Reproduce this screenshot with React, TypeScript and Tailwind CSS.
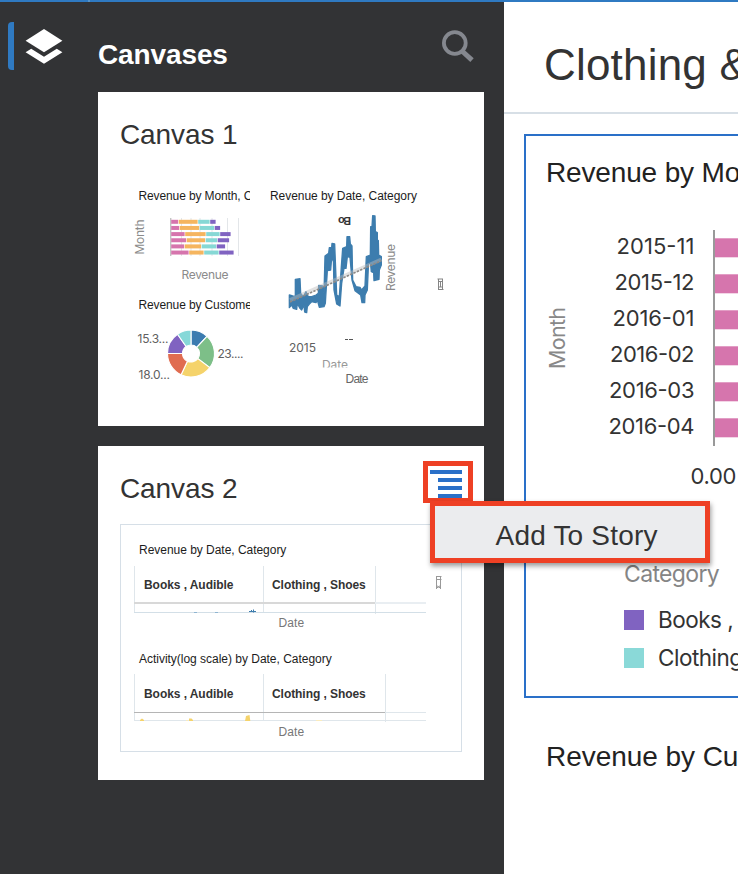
import React from "react";

const helv = "font-['Liberation_Sans',Arial,sans-serif]";

const months = ["2015-11", "2015-12", "2016-01", "2016-02", "2016-03", "2016-04"];
const monthWidths = [78, 80, 82, 84.5, 85.5, 86];

const miniBars = [
  [7.5, 19.5, 12, 6],
  [8.5, 20, 15, 6],
  [14, 21, 14, 11],
  [15.5, 19, 12, 12],
  [13.5, 17, 15, 9],
  [18, 15, 15, 15],
];
const seriesColors = ["#d675ad", "#f5b55f", "#86d8d5", "#8063c1"];

const slices: [number, number, string][] = [
  [0, 43, "#3c7cb0"],
  [43, 127, "#7dbf88"],
  [127, 205, "#f5d36b"],
  [205, 270, "#e06c50"],
  [270, 325, "#8063c1"],
  [325, 360, "#86d8d8"],
];

function slicePath(a: number, b: number) {
  const pt = (r: number, d: number) => {
    const t = (d * Math.PI) / 180;
    return `${(71 + r * Math.sin(t)).toFixed(2)} ${(40.5 - r * Math.cos(t)).toFixed(2)}`;
  };
  return `M${pt(23.5, a)} A23.5 23.5 0 0 1 ${pt(23.5, b)} L${pt(8.5, b)} A8.5 8.5 0 0 0 ${pt(8.5, a)} Z`;
}

function MiniTitle({ children, className = "" }: { children: React.ReactNode; className?: string }) {
  return (
    <div className={`h-4 overflow-hidden whitespace-nowrap text-[12px] leading-4 text-[#1c1c1c] ${helv} ${className}`}>
      {children}
    </div>
  );
}

function MiniBarChart() {
  return (
    <svg width="130" height="93" className="block">
      {[61.5, 71, 80, 92, 107.5, 118.5].map((x) => (
        <line key={x} x1={x} x2={x} y1="14" y2="52" stroke="#e3e6e9" strokeWidth="1" />
      ))}
      <line x1="50.8" x2="50.8" y1="14" y2="52" stroke="#aaa" />
      {miniBars.map((row, i) => {
        let x = 51.2;
        return row.map((w, j) => {
          const bar = <rect key={`${i}-${j}`} x={x} y={15.8 + i * 6.15} width={w - 0.6} height="4" fill={seriesColors[j]} />;
          x += w;
          return bar;
        });
      })}
      <text x="24" y="50.5" transform="rotate(-90 24 50.5)" fontSize="12" textLength="35" fill="#8b8b8b" fontFamily="Inter, sans-serif">Month</text>
      <text x="61.5" y="74.5" fontSize="12" textLength="47" fill="#8b8b8b" fontFamily="Inter, sans-serif">Revenue</text>
    </svg>
  );
}

function DonutChart() {
  return (
    <svg width="130" height="81" className="block">
      {slices.map(([a, b, c]) => (
        <path key={a} d={slicePath(a, b)} fill={c} stroke="#fff" strokeWidth="1.1" />
      ))}
      <g fontFamily="Inter, sans-serif" fontSize="12" fill="#606060">
        <text x="17.5" y="30" textLength="31">15.3...</text>
        <text x="97.5" y="44.5" textLength="26">23....</text>
        <text x="18.5" y="66" textLength="31.5">18.0...</text>
      </g>
    </svg>
  );
}

function TrendChart() {
  return (
    <svg width="212" height="190" viewBox="250 204 212 190" className="block">
      <g transform="translate(260 180) scale(.33333)">
        <path
          fill="#3d7dae"
          stroke="#3d7dae"
          strokeWidth="4"
          strokeLinejoin="round"
          d="M88 345L98 348 106 350 106 298 120 296 122 340 130 350 138 335 145 350 155 350 168 345 175 340 176 316 188 318 192 340 195 228 206 220 208 203 215 203 216 190 224 192 230 345 238 350 244 260 248 205 260 200 261 170 269 170 271 192 276 198 278 300 288 320 300 322 305 330 315 318 319 230 331 225 332 140 336 140 338 107 345 108 346 155 352 158 352 180 355 182 356 225 364 230 364 255 358 270 357 298 348 300 342 302 341 278 334 275 332 255 326 240 322 330 315 345 314 368 306 368 302 345 285 332 276 300 270 232 262 230 258 265 252 265 245 310 240 378 230 372 222 330 220 230 214 245 212 270 202 272 196 370 192 380 178 382 172 360 168 368 155 365 148 372 142 380 140 398 134 396 132 375 125 390 120 385 112 370 110 388 100 385 95 375 88 383Z"
        />
        <path d="M90 360L364 238" stroke="#bdbdbd" strokeOpacity=".45" strokeWidth="11" />
        <path d="M90 366L364 242" stroke="#8d8986" strokeWidth="5" strokeDasharray="7 4" />
      </g>
      <text x="351" y="217" transform="rotate(180 351 217)" fontSize="11" fontWeight="bold" fill="#333" textLength="13" fontFamily="Liberation Sans, sans-serif">Bo</text>
      <text x="394.5" y="291" transform="rotate(-90 394.5 291)" fontSize="12" textLength="47" fill="#8b8b8b" fontFamily="Inter, sans-serif">Revenue</text>
      <path d="M437.5 279h5.5M438 281.5h5M438 289.5h5.5M438.5 279v11M442.5 279v11M440.5 282v5M439 287h3" stroke="#858585" fill="none" />
      <path d="M345 339.5h3M349 339.5h4" stroke="#555" />
      <text x="289" y="352" fontSize="12" textLength="27" fill="#606060" fontFamily="Inter, sans-serif">2015</text>
      <svg x="318" y="356" width="36" height="11.5">
        <text x="4" y="12.5" fontSize="12" textLength="26" fill="#999" fontFamily="Inter, sans-serif">Date</text>
      </svg>
      <text x="345.5" y="382.5" fontSize="12" textLength="23" fill="#666" fontFamily="Liberation Sans, sans-serif">Date</text>
    </svg>
  );
}

function TrellisTable({ wide, children }: { wide?: boolean; children: React.ReactNode }) {
  return (
    <div className={`ml-[13px] flex w-[292px] flex-col ${helv}`}>
      <div className={wide ? "flex h-[39px]" : "flex h-9"}>
        <div className={`w-[129px] border-l border-[#dfe6eb] pl-[9px] text-[12px] font-bold text-[#333] ${wide ? "leading-[40px]" : "leading-[38px]"}`}>
          <span className="tracking-[-0.06px]">Books , Audible</span>
        </div>
        <div className={`border-x border-[#dfe6eb] pl-2 text-[12px] font-bold text-[#333] ${wide ? "w-[123px] leading-[40px]" : "w-[113px] leading-[38px]"}`}>
          <span className="tracking-[-0.06px]">Clothing , Shoes</span>
        </div>
      </div>
      <div className="flex">
        <div className={wide ? "-mt-px h-px w-[251px] bg-[#b5b5b5]" : "h-0.5 w-[241px] bg-[#d8d8d8]"} />
        <div className={wide ? "-mt-px h-px flex-1 bg-[#dfe6eb]" : "h-0.5 flex-1 bg-[#e9eef2]"} />
      </div>
      {children}
    </div>
  );
}

function CanvasOne() {
  return (
    <section className="h-[334px] bg-white pl-[22px] pt-[25px]">
      <h2 className={`h-9 text-[28px] leading-9 tracking-[-0.1px] text-[#333] ${helv}`}>Canvas 1</h2>
      <div className="mt-[35px] flex">
        <div className="w-[130px] overflow-hidden">
          <MiniTitle className="pl-[18.5px] tracking-[-0.12px]">Revenue by Month, Category</MiniTitle>
          <MiniBarChart />
          <MiniTitle className="pl-[18.5px] tracking-[-0.12px]">Revenue by Customer</MiniTitle>
          <DonutChart />
        </div>
        <div className="w-[212px]">
          <MiniTitle className="pl-5 tracking-[-0.05px]">Revenue by Date, Category</MiniTitle>
          <TrendChart />
        </div>
      </div>
    </section>
  );
}

function CanvasTwo() {
  return (
    <section className="h-[334px] bg-white px-[22px] pt-6">
      <div className="flex h-9 items-start justify-between">
        <h2 className={`pt-px text-[28px] leading-9 tracking-[-0.1px] text-[#333] ${helv}`}>Canvas 2</h2>
        <div className="flex h-7 w-8 flex-col items-end gap-1">
          <div className="h-1 w-8 bg-[#2a70c8]" />
          <div className="h-1 w-6 bg-[#2a70c8]" />
          <div className="h-1 w-6 bg-[#2a70c8]" />
          <div className="h-1 w-6 bg-[#2a70c8]" />
        </div>
      </div>
      <div className="relative mt-[18px] h-[228px] w-[342px] border border-[#d6dfe7] pt-[17px]">
        <MiniTitle className="pl-[18px] tracking-[-0.03px]">Revenue by Date, Category</MiniTitle>
        <div className="h-2" />
        <TrellisTable>
          <svg width="292" height="10" className="block">
            <path d="M.5 0v8M129.5 0v8M241.5 0v10" stroke="#dfe6eb" />
            <path d="M0 8.5h292" stroke="#d3dfe7" />
            <path d="M60 8.5h3M81 8.5h3" stroke="#8fb5d1" />
            <path d="M115 7.5h7M119.5 5.5v3M117.5 6v2" stroke="#3d7dae" />
          </svg>
        </TrellisTable>
        <div className={`h-4 pl-[157.5px] pt-px text-[12px] leading-4 tracking-[0.1px] text-[#777] ${helv}`}>Date</div>
        <MiniTitle className="mt-[21px] pl-[18px] tracking-[-0.02px]">Activity(log scale) by Date, Category</MiniTitle>
        <div className="h-[7px]" />
        <TrellisTable wide>
          <svg width="292" height="9" className="block">
            <path d="M.5 0v8M129.5 0v8M251.5 0v9" stroke="#dfe6eb" />
            <path d="M0 7.5h292" stroke="#dfe6eb" />
            <path d="M6 8V7l2-1.5 2 1.5v1zM55 8V5.5h2.5l1.5 1.5v1zM111 8l1-5 3.5-1 .8 6z" fill="#f5d36b" />
            <path d="M52 7.5h2M182 7.5h6" stroke="#faebbd" />
          </svg>
        </TrellisTable>
        <div className={`h-4 pl-[157.5px] pt-0.5 text-[12px] leading-4 tracking-[0.1px] text-[#777] ${helv}`}>Date</div>
        <svg width="8" height="15" className="absolute left-[314px] top-[50px]">
          <path d="M1.5 1v13M5.5 1v13M1 1.5h5.5M1 4.5h5.5M1.5 10.5l4.5 3M5.5 10.5l-4.5 3" stroke="#999" fill="none" />
        </svg>
      </div>
    </section>
  );
}

function Legend() {
  return (
    <div className="flex flex-col pl-[98px] font-['Inter',sans-serif]">
      <div className="h-[30px] text-[23px] leading-[30px] tracking-[-0.65px] text-[#858585]">Category</div>
      <div className="mt-4 flex h-[30px] items-center gap-3.5 whitespace-nowrap text-[22.5px] tracking-[-0.5px] text-[#333]">
        <span className="h-5 w-5 shrink-0 bg-[#8063c1]" />
        Books , Audible
      </div>
      <div className="mt-2 flex h-[30px] items-center gap-3.5 whitespace-nowrap text-[22.5px] tracking-[-0.5px] text-[#333]">
        <span className="h-5 w-5 shrink-0 bg-[#8ad9d8]" />
        Clothing , Shoes
      </div>
    </div>
  );
}

export default function App() {
  return (
    <div className={`relative flex h-[874px] w-[738px] flex-col overflow-hidden bg-white ${helv}`}>
      <div className="flex h-0.5 shrink-0 bg-[#2f7ac2]">
        <div className="ml-[88px] w-0.5 bg-[#5594ca]" />
      </div>
      <div className="flex min-h-0 flex-1">
        <nav className="flex w-[98px] shrink-0 bg-[#323335] pl-2 pt-5">
          <div className="h-12 w-1.5 rounded-l-sm bg-[#2f7ac2]" />
          <svg width="38" height="38" viewBox="0 0 38 38" className="ml-[11px] mt-[6px]">
            <path d="M19 1L37.4 12.7 19 24.3.6 12.7z" fill="#fff" />
            <path d="M.6 24.3L6.2 20.7 19 28.8 31.8 20.7 37.4 24.3 19 35.7z" fill="#fff" />
          </svg>
        </nav>
        <aside className="flex w-[406px] shrink-0 flex-col bg-[#323335] pr-5">
          <header className="flex h-[90px] shrink-0 justify-between pr-[9px]">
            <h1 className="pt-[35px] text-[28px] font-bold leading-9 tracking-[-0.12px] text-white">Canvases</h1>
            <svg width="34" height="34" viewBox="0 0 34 34" className="mt-[27px]" fill="none" stroke="#85888f">
              <circle cx="13.8" cy="14" r="10.9" strokeWidth="3.8" />
              <path d="M21 22L31 31.2" strokeWidth="5" />
            </svg>
          </header>
          <div className="flex flex-col gap-5">
            <CanvasOne />
            <CanvasTwo />
          </div>
        </aside>
        <main className="min-w-0 flex-1 overflow-hidden">
          <header className="h-28 whitespace-nowrap border-b-2 border-[#d7dfe6] pl-10 pt-[37px] text-[44px] leading-[52px] tracking-[0.2px] text-[#333]">
            Clothing &amp; Shoes
          </header>
          <div className="ml-5 mt-5 h-[564px] w-[300px] border-2 border-[#2a70c8] pt-[19px]">
            <h3 className="h-9 whitespace-nowrap pl-5 text-[28px] leading-9 tracking-[-0.15px] text-[#222]">Revenue by Month</h3>
            <svg width="212" height="309" viewBox="0 1 212 309" className="block" fontFamily="Inter, sans-serif">
              {months.map((m, i) => (
                <g key={m}>
                  <text x={168.5 - monthWidths[i]} y={64 + i * 36} fontSize="22" textLength={monthWidths[i]} fill="#333">{m}</text>
                  <rect x="188" y={48.3 + i * 36} width="24" height="19" fill="#d675ad" />
                </g>
              ))}
              <rect x="187" y="40" width="2" height="216" fill="#999" />
              <text x="39" y="179" transform="rotate(-90 39 179)" fontSize="21.5" textLength="62" fill="#888">Month</text>
              <text x="164.5" y="294" fontSize="22" textLength="46" fill="#333">0.00</text>
            </svg>
            <div className="h-[59px]" />
            <Legend />
          </div>
          <h3 className="mt-[41px] whitespace-nowrap pl-[42px] text-[28px] leading-9 tracking-[-0.05px] text-[#222]">Revenue by Customer</h3>
        </main>
      </div>
      <div className="absolute left-[422.5px] top-[461px] h-[42px] w-[50px] border-[5px] border-[#ee4024]" />
      <div className="absolute left-[429.5px] top-[500.5px] flex h-[62.5px] w-[280px] items-center border-[5px] border-[#ee4024] bg-[#ebecee] pl-[61px] pt-[9px] text-[28px] tracking-[0.2px] text-[#333] shadow-[1px_3px_5px_rgba(0,0,0,0.4)]">
        Add To Story
      </div>
    </div>
  );
}
